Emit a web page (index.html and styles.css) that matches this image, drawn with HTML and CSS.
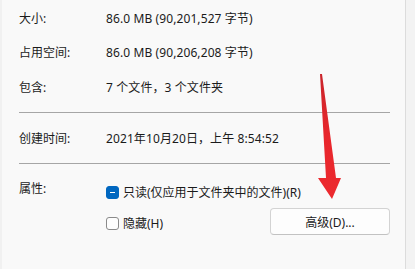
FILE: index.html
```html
<!DOCTYPE html>
<html lang="zh-CN">
<head>
    <meta charset="UTF-8">
    <title>属性</title>
    <link rel="stylesheet" href="styles.css">
</head>
<body>
    <div class="window">
        <div class="panel">
            <div class="row r1">
                <span class="label">大小:</span>
                <span class="value">86.0 MB (90,201,527 字节)</span>
            </div>
            <div class="row r2">
                <span class="label">占用空间:</span>
                <span class="value">86.0 MB (90,206,208 字节)</span>
            </div>
            <div class="row r3">
                <span class="label">包含:</span>
                <span class="value">7 个文件，3 个文件夹</span>
            </div>
            <div class="sep"></div>
            <div class="row r4">
                <span class="label">创建时间:</span>
                <span class="value">2021年10月20日，上午 8:54:52</span>
            </div>
            <div class="sep"></div>
            <div class="attrs">
                <span class="label">属性:</span>
                <div class="attr-body">
                    <div class="check-line">
                        <span class="box box-mixed"></span>
                        <span>只读(仅应用于文件夹中的文件)(R)</span>
                    </div>
                    <div class="check-line second">
                        <span class="box"></span>
                        <span>隐藏(H)</span>
                        <button class="btn">高级(D)...</button>
                    </div>
                </div>
            </div>
        </div>
        <div class="scroll-edge"></div>
    </div>

    <svg class="arrow" width="415" height="269" viewBox="0 0 415 269">
        <defs>
            <linearGradient id="red" x1="0" y1="0" x2="0" y2="1">
                <stop offset="0" stop-color="#c9252b"/>
                <stop offset="0.5" stop-color="#e8262c"/>
                <stop offset="1" stop-color="#ec2a2f"/>
            </linearGradient>
        </defs>
        <polygon fill="url(#red)" points="320,74 322,74 336,178 341,178 332,199 318,178 326,178"/>
    </svg>
</body>
</html>
```

FILE: styles.css
```css
body {
    margin: 0;
    background-color: #f9f9f9;
    font-family: "Noto Sans", "Noto Sans CJK SC", sans-serif;
    font-size: 12px;
    color: #1b1b1b;
}
.window {
    display: flex;
    height: 269px;
    border-left: 2px solid #f1f1f1;
}
.panel {
    flex: 1;
    padding: 1px 15px 0 17px;
}
.row {
    display: flex;
    align-items: center;
}
.r1, .r2 {
    height: 34px;
}
.r3 {
    height: 35px;
    margin-bottom: 8px;
}
.r4 {
    height: 50px;
}
.label {
    width: 87px;
    flex-shrink: 0;
}
.value {
    letter-spacing: 0.1px;
}
.sep {
    height: 1px;
    background-color: #a6a6a6;
}
.attrs {
    display: flex;
    padding-top: 16px;
}
.attrs .label {
    line-height: 18px;
}
.attr-body {
    flex: 1;
    padding-top: 3px;
}
.check-line {
    display: flex;
    align-items: center;
    height: 18px;
}
.check-line.second {
    height: 27px;
    margin-top: 7px;
}
.box {
    width: 11px;
    height: 11px;
    border: 1px solid #8a8a8a;
    border-radius: 3px;
    background-color: #fdfdfd;
    margin-right: 4px;
    position: relative;
    flex-shrink: 0;
}
.check-line.second .box {
    margin-top: 3px;
}
.box-mixed {
    background-color: #0067c0;
    border-color: #0067c0;
}
.box-mixed::after {
    content: "";
    position: absolute;
    left: 3px;
    top: 5px;
    width: 5px;
    height: 1px;
    background-color: #fff;
}
.check-line.second span:nth-child(2) {
    margin-top: 3px;
}
.btn {
    margin-left: auto;
    width: 120px;
    height: 27px;
    background-color: #fdfdfd;
    border: 1px solid #d3d3d3;
    border-bottom-color: #c2c2c2;
    border-radius: 4px;
    font-family: inherit;
    font-size: 12px;
    color: #1b1b1b;
    padding: 0;
}
.scroll-edge {
    width: 9px;
    border-left: 1px solid #dcdcdc;
    background-color: #f3f3f3;
}
.arrow {
    position: absolute;
    left: 0;
    top: 0;
    pointer-events: none;
}
```
